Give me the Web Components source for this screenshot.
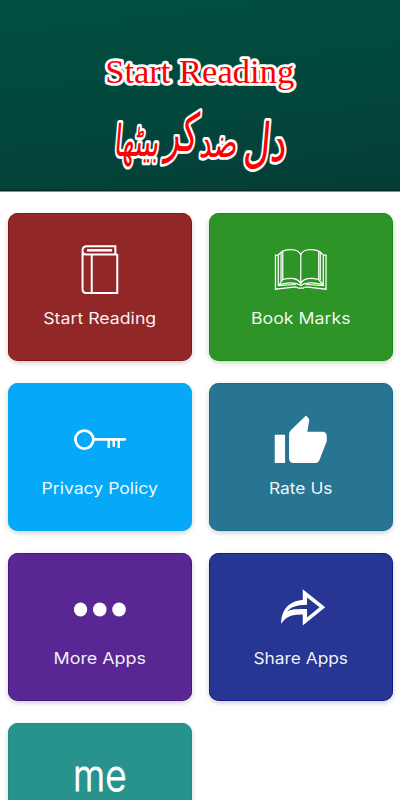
<!DOCTYPE html>
<html lang="en"><head><meta charset="utf-8"><title>Start Reading</title>
<style>html,body{margin:0;background:#fff;height:800px;overflow:hidden;font-family:"Open Sans","Noto Sans",sans-serif}</style></head>
<body>
<menu-page></menu-page>
<script>
class BookHeader extends HTMLElement{
 constructor(){super();this.attachShadow({mode:'open'}).innerHTML=`
<style>:host{display:block;height:192px;box-sizing:border-box;background:linear-gradient(173deg,#004e40 12%,#044239 82%,#063b34);border-bottom:1px solid #809486;box-shadow:inset 0 -1px #032b20}
svg{display:block}text{fill:#fe0000;stroke:#fff;stroke-linejoin:round;paint-order:stroke;text-anchor:middle}
.en{font:34px "Liberation Serif",serif;stroke-width:5.500px}
.ur{font:38px "DejaVu Sans",sans-serif;stroke-width:5px}</style>
<svg width="400" height="191"><text class="en" x="199.700" y="82.500" textLength="189" lengthAdjust="spacingAndGlyphs">Start Reading</text>
<g transform="translate(0 156) skewX(-5) scale(1 1.15)"><text class="ur" lang="ur" direction="rtl"><tspan x="253" y="4" font-size="46" textLength="43" lengthAdjust="spacingAndGlyphs">دل</tspan> <tspan x="206" y="1" font-size="36" textLength="38" lengthAdjust="spacingAndGlyphs">ضد</tspan> <tspan x="167" y="-4" font-size="46" textLength="33" lengthAdjust="spacingAndGlyphs">کر</tspan> <tspan x="136" y="0" font-size="38" textLength="45" lengthAdjust="spacingAndGlyphs">بیٹھا</tspan></text></g></svg>`}
}
customElements.define('book-header',BookHeader);

const icons={
book:`<g fill="none" stroke="#fff" stroke-width="2"><path d="M117 254.500H86C83.500 254.500 82.500 252.500 82.500 250.500C82.500 247.500 84 246.300 87 246.300H115.300V254M82.500 250V289Q82.500 293 86 293H117.200V254M91.700 255V292"/><path d="M87 250.300H112" stroke-width="2.500"/></g>`,
open:`<g fill="none" stroke="#fff" stroke-width="1.250"><path d="M281 252.500Q284 249.500 291 249.500Q300 249.500 301 255.500Q302 249.500 311 249.500Q318 249.500 321 252.500M283 251V279.500Q297 276 301 283.500Q305 276 319 279.500V251M301 255V284M283 279.500L279.500 284.500Q294 281 301 285.500Q308 281 323 284.500L319 279.500M281 252.500L278.500 255V285.500L296 284.500M321 252.500L323.500 255V285.500L306 284.500M278.500 255H275.700V289.200L296 287Q298 287.300 298.500 288.200H303.500Q304 287.300 306 287L326.300 289.200V255H323.500"/><path d="M320.500 252.500V280M281.300 252.500V281"/></g>`,
key:`<g fill="none" stroke="#fff"><circle cx="84.300" cy="439.600" r="9" stroke-width="2.700"/><path d="M94 439.400H124.700" stroke-width="2.700" stroke-linecap="round"/><path d="M108.700 440V448M113.700 440V446.700M118.700 440V448" stroke-width="2.400"/></g>`,
thumb:`<path fill="#fff" d="M275 434.700H285.300V463H275ZM289.300 434.500Q289.300 432 291 430.300L306.300 415.500L308.700 418.200Q309.800 419.300 309.400 421L307.500 431.700H322.500Q327 431.700 327 436.200V440Q327 441.500 326.300 443L319.800 459.700Q318.500 463 315.500 463H294Q289.300 463 289.300 458.300Z"/>`,
dots:`<g fill="#fff"><ellipse cx="80.500" cy="609.500" rx="6.600" ry="7.100"/><ellipse cx="99.700" cy="609.500" rx="6.800" ry="7.100"/><ellipse cx="119" cy="609.500" rx="6.800" ry="7.100"/></g>`,
share:`<path fill="#fff" fill-rule="evenodd" d="M303 589.300L325.500 607.200L303 625.500V614.500C290 614 285 618 281.500 624C281 611 289 600.500 303 600ZM307.300 597.500V604.700C296 604.700 290 608 287.500 611.500C291 609 299 609 307.300 609V617.500L319.800 607.300Z"/>`,
me:`<text class="me" x="73" y="791.300" textLength="53.500" lengthAdjust="spacingAndGlyphs">me</text>`
};
class MenuCard extends HTMLElement{
 connectedCallback(){
  const a=n=>this.getAttribute(n),c=a('col')==='1'?99.700:301,t=+a('top'),label=a('label')||'';
  this.attachShadow({mode:'open'}).innerHTML=`
<style>:host{display:block;height:148px;border-radius:10px;background:${a('color')};box-shadow:0 2px 5px rgba(0,0,0,.2),inset 0 0 0 .5px ${a('edge')}}
svg{display:block;width:100%;height:100%}.label{font:16px Inter,"Open Sans",sans-serif;fill:#fff;fill-opacity:.95;text-anchor:middle}
.me{font:300 43px Inter,sans-serif;fill:#fff;stroke:#fff;stroke-width:.8}</style>
<svg viewBox="${c-91.750} ${t} 184.500 148">${icons[a('icon')]}${label?`<text class="label" x="${c}" y="${t+110.800}" textLength="${a('span')}" lengthAdjust="spacingAndGlyphs">${label}</text>`:''}</svg>`}
}
customElements.define('menu-card',MenuCard);
class MenuPage extends HTMLElement{
 constructor(){super();this.attachShadow({mode:'open'}).innerHTML=`
<style>:host{display:block;width:400px;height:800px;overflow:hidden}main{display:grid;grid-template-columns:184.500px 184.500px;column-gap:16.500px;row-gap:22px;padding:21px 7.500px 0}</style>
<book-header></book-header><main>
<menu-card col="1" top="213" color="#922727" edge="#800000" icon="book" label="Start Reading" span="113"></menu-card>
<menu-card col="2" top="213" color="#2e9427" edge="#008a00" icon="open" label="Book Marks" span="99.500"></menu-card>
<menu-card col="1" top="383" color="#05a9f7" edge="#05a9f7" icon="key" label="Privacy Policy" span="116.500"></menu-card>
<menu-card col="2" top="383" color="#287593" edge="#006487" icon="thumb" label="Rate Us" span="63.500"></menu-card>
<menu-card col="1" top="553" color="#592793" edge="#410080" icon="dots" label="More Apps" span="92.500"></menu-card>
<menu-card col="2" top="553" color="#273593" edge="#000080" icon="share" label="Share Apps" span="94.500"></menu-card>
<menu-card col="1" top="723" color="#27938c" edge="#168a82" icon="me"></menu-card>
</main>`}
}
customElements.define('menu-page',MenuPage);
</script></body></html>
